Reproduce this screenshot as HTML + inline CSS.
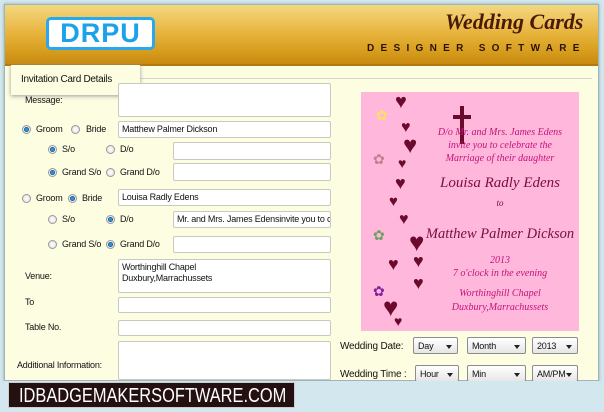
<!DOCTYPE html><html><head><style>
*{margin:0;padding:0;box-sizing:border-box}
body{width:604px;height:412px;background:#d3e7ee;position:relative;overflow:hidden;font-family:"Liberation Sans",sans-serif;font-size:9px;color:#111}
.a{position:absolute}
.win{left:4px;top:4px;width:595px;height:377px;background:#fdfde2;border:1px solid #9fb3bb;box-shadow:0 0 3px #8aa}
.hdr{left:5px;top:5px;width:593px;height:61px;background:linear-gradient(#f3d880 0%,#e8b640 45%,#d9a020 75%,#c88a10 100%);border-bottom:2px solid #b07a10}
.inp{position:absolute;background:#fff;border:1px solid #c9c9c0;border-radius:2px;font-size:9px;padding:2px 3px;white-space:nowrap;overflow:hidden;letter-spacing:-0.2px}
.r{position:absolute;width:9px;height:9px;border-radius:50%;border:1px solid #999;background:radial-gradient(#fff,#ddd)}
.r.on{background:radial-gradient(#2f8fd0 30%,#0a4f90 45%,#eee 55%)}
.l{position:absolute;font-size:9px;white-space:nowrap;letter-spacing:-0.2px}
.sel{position:absolute;height:17px;background:linear-gradient(#fff,#e6e6e6);border:1px solid #8c8c8c;border-radius:2px;font-size:9px;padding:3px 4px;letter-spacing:-0.2px}
.sel:after{content:"";position:absolute;right:5px;top:7px;border:3px solid transparent;border-top:4px solid #222}
.h{position:absolute;color:#6b0a2c;line-height:1}
.ct{position:absolute;color:#c4127a;font-family:"Liberation Serif",serif;font-style:italic;white-space:nowrap;text-align:center}
</style></head><body>
<div class="a win"></div>
<div class="a hdr"></div>
<div class="a" style="left:46px;top:17px;width:109px;height:33px;background:#fff;border:3px solid #28a8ee;border-radius:5px;color:#1aa2ea;font-weight:bold;font-size:27px;text-align:center;line-height:27px;letter-spacing:1px">DRPU</div>
<div class="a" style="left:445px;top:9px;font-family:'Liberation Serif',serif;font-style:italic;font-weight:bold;font-size:22px;color:#4a1a08;white-space:nowrap">Wedding Cards</div>
<div class="a" style="left:367px;top:43px;font-weight:bold;font-size:10px;letter-spacing:6.3px;color:#2a1405;white-space:nowrap">DESIGNER SOFTWARE</div>
<div class="a" style="left:140px;top:78px;width:452px;height:1px;background:#d8d8c8"></div>
<div class="a" style="left:11px;top:65px;width:129px;height:30px;background:#fdfde2;box-shadow:0 1px 4px #999;font-size:10px;padding:9px 0 0 10px;letter-spacing:-0.3px;white-space:nowrap">Invitation Card Details</div>
<div class="l" style="left:25px;top:95px">Message:</div>
<div class="inp" style="left:118px;top:83px;width:213px;height:34px"></div>
<div class="r on" style="left:22px;top:125px"></div><div class="l" style="left:36px;top:124px">Groom</div>
<div class="r" style="left:71px;top:125px"></div><div class="l" style="left:86px;top:124px">Bride</div>
<div class="inp" style="left:118px;top:121px;width:213px;height:17px">Matthew Palmer Dickson</div>
<div class="r on" style="left:48px;top:145px"></div><div class="l" style="left:62px;top:144px">S/o</div>
<div class="r" style="left:106px;top:145px"></div><div class="l" style="left:120px;top:144px">D/o</div>
<div class="inp" style="left:173px;top:142px;width:158px;height:18px"></div>
<div class="r on" style="left:48px;top:168px"></div><div class="l" style="left:62px;top:167px">Grand S/o</div>
<div class="r" style="left:106px;top:168px"></div><div class="l" style="left:120px;top:167px">Grand D/o</div>
<div class="inp" style="left:173px;top:163px;width:158px;height:18px"></div>
<div class="r" style="left:22px;top:194px"></div><div class="l" style="left:36px;top:193px">Groom</div>
<div class="r on" style="left:68px;top:194px"></div><div class="l" style="left:82px;top:193px">Bride</div>
<div class="inp" style="left:118px;top:189px;width:213px;height:17px">Louisa Radly Edens</div>
<div class="r" style="left:48px;top:215px"></div><div class="l" style="left:62px;top:214px">S/o</div>
<div class="r on" style="left:106px;top:215px"></div><div class="l" style="left:120px;top:214px">D/o</div>
<div class="inp" style="left:173px;top:211px;width:158px;height:17px">Mr. and Mrs. James Edensinvite you to ce</div>
<div class="r" style="left:48px;top:240px"></div><div class="l" style="left:62px;top:239px">Grand S/o</div>
<div class="r on" style="left:106px;top:240px"></div><div class="l" style="left:120px;top:239px">Grand D/o</div>
<div class="inp" style="left:173px;top:236px;width:158px;height:17px"></div>
<div class="l" style="left:25px;top:271px">Venue:</div>
<div class="inp" style="left:118px;top:259px;width:213px;height:34px;white-space:normal;line-height:11px">Worthinghill Chapel<br>Duxbury,Marrachussets</div>
<div class="l" style="left:25px;top:297px">To</div>
<div class="inp" style="left:118px;top:297px;width:213px;height:16px"></div>
<div class="l" style="left:25px;top:322px">Table No.</div>
<div class="inp" style="left:118px;top:320px;width:213px;height:16px"></div>
<div class="l" style="left:17px;top:360px">Additional Information:</div>
<div class="inp" style="left:118px;top:341px;width:213px;height:39px"></div>
<div class="a" style="left:361px;top:92px;width:218px;height:239px;background:#ffb8dc;overflow:hidden">
 <div class="a" style="left:99px;top:14px;width:4px;height:38px;background:#6b0a2c"></div>
 <div class="a" style="left:92px;top:23px;width:18px;height:4px;background:#6b0a2c"></div>
 <div class="h" style="left:34px;top:0px;font-size:20px">♥</div>
 <div class="h" style="left:40px;top:28px;font-size:16px">♥</div>
 <div class="h" style="left:42px;top:42px;font-size:24px">♥</div>
 <div class="h" style="left:37px;top:64px;font-size:14px">♥</div>
 <div class="h" style="left:34px;top:82px;font-size:18px">♥</div>
 <div class="h" style="left:28px;top:102px;font-size:15px">♥</div>
 <div class="h" style="left:38px;top:120px;font-size:16px">♥</div>
 <div class="h" style="left:48px;top:137px;font-size:26px">♥</div>
 <div class="h" style="left:27px;top:163px;font-size:18px">♥</div>
 <div class="h" style="left:52px;top:160px;font-size:18px">♥</div>
 <div class="h" style="left:52px;top:182px;font-size:18px">♥</div>
 <div class="h" style="left:22px;top:202px;font-size:26px">♥</div>
 <div class="h" style="left:33px;top:222px;font-size:14px">♥</div>
 <div class="h" style="left:15px;top:16px;font-size:14px;color:#ffe060">✿</div>
 <div class="h" style="left:12px;top:60px;font-size:14px;color:#c08090">✿</div>
 <div class="h" style="left:12px;top:136px;font-size:14px;color:#70a060">✿</div>
 <div class="h" style="left:12px;top:192px;font-size:14px;color:#8020a0">✿</div>
 <div class="ct" style="left:60px;width:158px;top:34px;font-size:10px;line-height:13px">D/o Mr. and Mrs. James Edens<br>invite you to celebrate the<br>Marriage of their daughter</div>
 <div class="ct" style="left:60px;width:158px;top:83px;font-size:15px;color:#7a0c40">Louisa Radly Edens</div>
 <div class="ct" style="left:60px;width:158px;top:106px;font-size:9px;color:#7a0c40">to</div>
 <div class="ct" style="left:55px;width:168px;top:134px;font-size:14.5px;color:#7a0c40">Matthew Palmer Dickson</div>
 <div class="ct" style="left:60px;width:158px;top:162px;font-size:10px;line-height:13px">2013<br>7 o'clock in the evening</div>
 <div class="ct" style="left:60px;width:158px;top:195px;font-size:10px;line-height:14px">Worthinghill Chapel<br>Duxbury,Marrachussets</div>
</div>
<div class="l" style="left:340px;top:341px;font-size:10px">Wedding Date:</div>
<div class="sel" style="left:413px;top:337px;width:45px">Day</div>
<div class="sel" style="left:467px;top:337px;width:59px">Month</div>
<div class="sel" style="left:532px;top:337px;width:46px">2013</div>
<div class="l" style="left:340px;top:369px;font-size:10px">Wedding Time :</div>
<div class="sel" style="left:415px;top:365px;width:44px">Hour</div>
<div class="sel" style="left:467px;top:365px;width:59px">Min</div>
<div class="sel" style="left:532px;top:365px;width:46px">AM/PM</div>
<div class="a" style="left:4px;top:381px;width:595px;height:31px;background:#d3e7ee"></div>
<div class="a" style="left:8px;top:382px;width:287px;height:26px;background:#241010;border:1px solid #ccc;overflow:hidden"><div style="position:absolute;left:10px;top:2px;color:#fff;font-size:20px;white-space:nowrap;transform:scaleX(0.82);transform-origin:left">IDBADGEMAKERSOFTWARE.COM</div></div>
</body></html>
